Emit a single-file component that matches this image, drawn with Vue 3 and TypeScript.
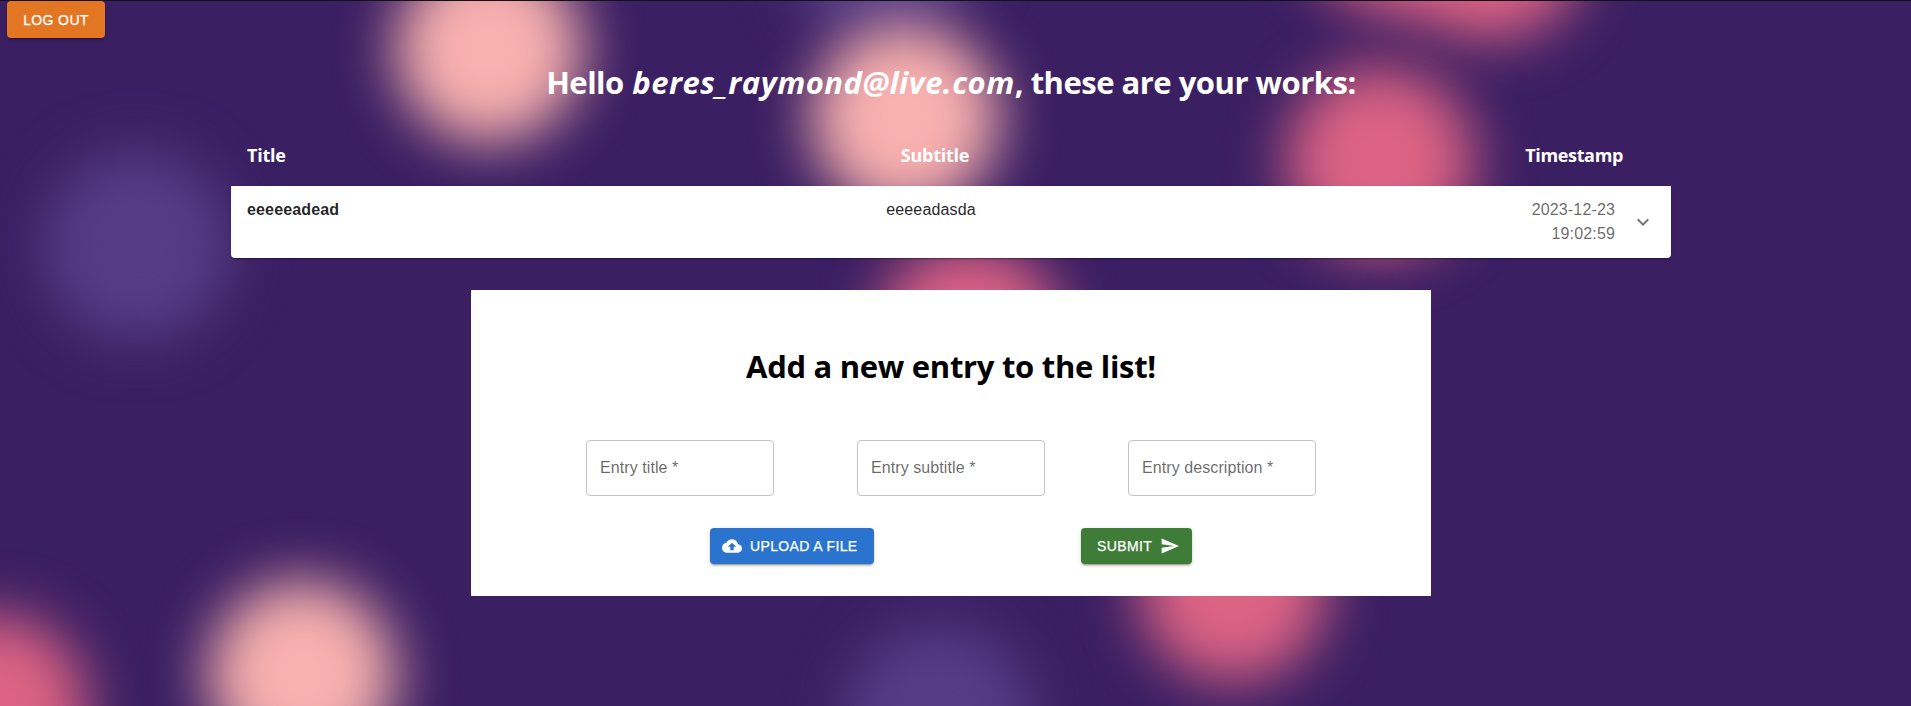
<script setup lang="ts">
interface Particle { x: number; y: number; tone: 'salmon' | 'pink' | 'violet' }
interface Entry { title: string; subtitle: string; date: string; time: string }

const email = 'beres_raymond@live.com'
const fields: string[] = ['Entry title', 'Entry subtitle', 'Entry description']
const entries: Entry[] = [
  { title: 'eeeeeadead', subtitle: 'eeeeadasda', date: '2023-12-23', time: '19:02:59' },
]
const particles: Particle[] = [
  { x: 137, y: 246, tone: 'violet' },
  { x: 880, y: -56, tone: 'violet' },
  { x: 939, y: 720, tone: 'violet' },
  { x: 489, y: 49, tone: 'salmon' },
  { x: 905, y: 118, tone: 'salmon' },
  { x: 302, y: 675, tone: 'salmon' },
  { x: 1380, y: 160, tone: 'pink' },
  { x: 1491, y: -54, tone: 'pink' },
  { x: 1395, y: -82, tone: 'pink' },
  { x: 969, y: 338, tone: 'pink' },
  { x: 1233, y: 588, tone: 'pink' },
  { x: -7, y: 708, tone: 'pink' },
]
</script>

<template>
  <div class="page">
    <div class="backdrop" aria-hidden="true">
      <span
        v-for="(p, i) in particles"
        :key="i"
        class="particle"
        :class="p.tone"
        :style="{ left: p.x + 'px', top: p.y + 'px' }"
      />
    </div>

    <main class="content">
      <button class="btn logout" type="button">Log out</button>

      <h1 class="greeting">Hello <em>{{ email }}</em>, these are your works:</h1>

      <section class="works">
        <header class="columns">
          <h3>Title</h3>
          <h3 class="col-subtitle">Subtitle</h3>
          <h3 class="col-time">Timestamp</h3>
        </header>
        <article v-for="entry in entries" :key="entry.title" class="row">
          <strong>{{ entry.title }}</strong>
          <span class="subtitle">{{ entry.subtitle }}</span>
          <span class="stamp">{{ entry.date }}<br />{{ entry.time }}</span>
          <svg class="chevron" viewBox="0 0 24 24"><path d="M16.59 8.59 12 13.17 7.41 8.59 6 10l6 6 6-6z" /></svg>
        </article>
      </section>

      <form class="card" @submit.prevent>
        <h2>Add a new entry to the list!</h2>
        <div class="fields">
          <label v-for="field in fields" :key="field" class="field">{{ field }} *</label>
        </div>
        <div class="actions">
          <button class="btn upload" type="button">
            <svg viewBox="0 0 24 24"><path d="M19.35 10.04C18.67 6.59 15.64 4 12 4 9.11 4 6.6 5.64 5.35 8.04 2.34 8.36 0 10.91 0 14c0 3.31 2.69 6 6 6h13c2.76 0 5-2.24 5-5 0-2.64-2.05-4.78-4.65-4.96zM14 13v4h-4v-4H7l5-5 5 5h-3z" /></svg>
            Upload a file
          </button>
          <button class="btn submit" type="submit">
            Submit
            <svg viewBox="0 0 24 24"><path d="M2.01 21 23 12 2.01 3 2 10l15 2-15 2z" /></svg>
          </button>
        </div>
      </form>
    </main>
  </div>
</template>

<style>
body {
  margin: 0;
  overflow: hidden;
}
</style>

<style scoped>
.page {
  position: relative;
  box-sizing: border-box;
  height: 706px;
  overflow: hidden;
  border-top: 1px solid #111118;
  background: #3b1f63;
  font-family: "Liberation Sans", Arial, sans-serif;
}
.backdrop {
  position: absolute;
  inset: -1px 0 0;
  overflow: hidden;
}
.particle {
  position: absolute;
  width: 188px;
  height: 188px;
  margin: -94px 0 0 -94px;
  border-radius: 50%;
  filter: blur(28px);
}
.salmon { background: #f9b1af; }
.pink { background: #dc6384; }
.violet { background: #553d86; }

.content {
  position: relative;
  display: flex;
  flex-direction: column;
  align-items: center;
  width: 1902px;
}
.btn {
  display: inline-flex;
  align-items: center;
  box-sizing: border-box;
  height: 36px;
  padding: 0 16px;
  border: 0;
  border-radius: 4px;
  color: #fff;
  font: 500 14px/24px "Liberation Sans", Arial, sans-serif;
  letter-spacing: 0.37px;
  text-transform: uppercase;
  white-space: nowrap;
  -webkit-text-stroke: 0.25px currentColor;
  box-shadow: 0 3px 1px -2px rgba(0, 0, 0, 0.2), 0 2px 2px rgba(0, 0, 0, 0.14), 0 1px 5px rgba(0, 0, 0, 0.12);
}
.btn svg {
  width: 20px;
  height: 20px;
  fill: currentColor;
}
.logout {
  align-self: flex-start;
  justify-content: center;
  width: 98px;
  height: 37px;
  margin-left: 7px;
  background: #e37623;
}
h1,
h2,
h3 {
  margin: 0;
  font-family: "Open Sans", "Noto Sans", sans-serif;
  font-weight: 700;
  white-space: nowrap;
}
.greeting {
  margin-top: 22px;
  color: #fff;
  font-size: 31px;
  line-height: 44px;
  letter-spacing: -0.5px;
}
.greeting em {
  margin-left: 1px;
  letter-spacing: 0.47px;
}
.works {
  width: 1440px;
  margin-top: 27px;
}
.columns {
  display: grid;
  grid-template-columns: 1fr auto 1fr;
  align-items: center;
  height: 48px;
  margin-bottom: 7px;
  padding: 0 48px 0 16px;
  color: #fff;
}
.columns h3 {
  font-size: 18px;
  line-height: 26px;
  letter-spacing: -0.25px;
}
.columns .col-time {
  justify-self: end;
  letter-spacing: -0.35px;
}
.row {
  display: flex;
  align-items: flex-start;
  justify-content: space-between;
  box-sizing: border-box;
  height: 72px;
  padding: 12px 16px;
  border-radius: 0 0 4px 4px;
  background: #fff;
  color: rgba(0, 0, 0, 0.87);
  font-size: 16px;
  line-height: 24px;
  letter-spacing: 0.15px;
  box-shadow: 0 2px 1px -1px rgba(0, 0, 0, 0.2), 0 1px 1px rgba(0, 0, 0, 0.14), 0 1px 3px rgba(0, 0, 0, 0.12);
}
.row strong {
  flex: 1;
}
.stamp {
  flex: 1;
  padding-right: 16px;
  color: rgba(0, 0, 0, 0.6);
  text-align: right;
}
.chevron {
  align-self: center;
  width: 24px;
  height: 24px;
  fill: rgba(0, 0, 0, 0.54);
}
.card {
  box-sizing: border-box;
  width: 960px;
  height: 306px;
  margin-top: 32px;
  background: #fff;
}
.card h2 {
  margin-top: 54px;
  color: #000;
  font-size: 31px;
  line-height: 44px;
  letter-spacing: -0.3px;
  text-align: center;
}
.fields {
  display: flex;
  justify-content: center;
  gap: 83px;
  margin-top: 52px;
}
.field {
  box-sizing: border-box;
  width: 188px;
  height: 56px;
  padding: 0 13px;
  border: 1px solid #c4c4c4;
  border-radius: 4px;
  color: rgba(0, 0, 0, 0.6);
  font-size: 16px;
  line-height: 54px;
  letter-spacing: 0.08px;
}
.actions {
  display: flex;
  justify-content: center;
  gap: 207px;
  margin-top: 32px;
}
.upload {
  width: 164px;
  padding-left: 12px;
  gap: 8px;
  background: #2a74cf;
}
.submit {
  width: 111px;
  padding-right: 12px;
  gap: 8px;
  background: #3e7c38;
}
</style>
